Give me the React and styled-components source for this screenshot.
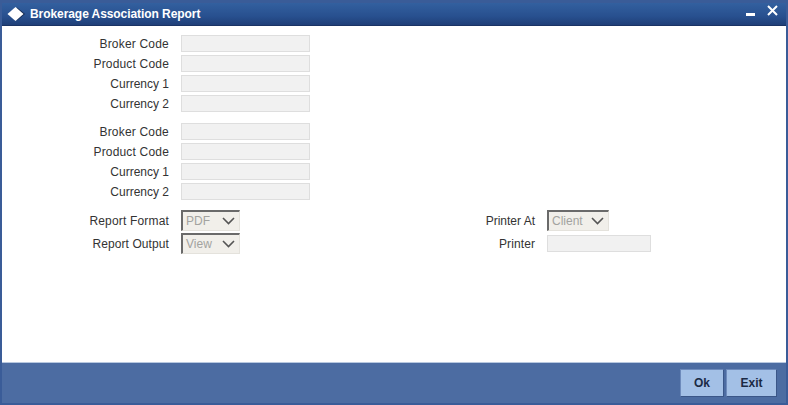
import React from "react";
import styled, { createGlobalStyle } from "styled-components";

const Global = createGlobalStyle`
  html, body { margin: 0; padding: 0; background: #fff; }
  body { font-family: "Liberation Sans", Arial, sans-serif; }
`;

const Window = styled.div`
  width: 788px;
  height: 405px;
  box-sizing: border-box;
  display: flex;
  flex-direction: column;
  background: #3a5c98;
  padding: 3px 2px 2px 2px;
  overflow: hidden;
`;
const TitleBar = styled.div`
  height: 23px;
  flex: none;
  display: flex;
  align-items: center;
  background: linear-gradient(#33609f, #28508f 60%, #1f3f78);
  border-bottom: 1px solid #1a3364;
  box-sizing: border-box;
  padding: 0 8px 0 5px;
  color: #fff;
`;
const Title = styled.div`
  font-size: 12px;
  font-weight: 700;
  letter-spacing: -0.07px;
  margin-left: 5px;
  flex: 1;
`;
const Body = styled.div`
  flex: 1;
  background: #fff;
  padding: 9px 0 0;
  display: flex;
  flex-direction: column;
`;
const Group = styled.div`
  display: flex;
  flex-direction: column;
  gap: 3px;
  margin-bottom: ${(p) => p.$after || 0}px;
`;
const Row = styled.div`
  display: flex;
  align-items: center;
  height: 17px;
`;
const Label = styled.label`
  width: 167px;
  text-align: right;
  font-size: 12px;
  color: #333;
  margin-right: 12px;
  letter-spacing: ${(p) => p.$ls || 0}px;
`;
const Input = styled.div`
  width: ${(p) => p.$w || 129}px;
  height: 17px;
  box-sizing: border-box;
  background: #f1f1f1;
  border: 1px solid #dedede;
`;
const SelectRows = styled.div`
  display: grid;
  grid-template-columns: 366px 1fr;
  grid-template-rows: 21px 21px;
  row-gap: 2px;
`;
const Cell = styled.div`
  display: flex;
  align-items: center;
`;
const Select = styled.div`
  width: ${(p) => p.$w}px;
  height: 21px;
  box-sizing: border-box;
  background: #f1efea;
  border-top: 2px solid #6a6a6a;
  border-left: 2px solid #6a6a6a;
  border-right: 1px solid #e4e2dc;
  border-bottom: 1px solid #e4e2dc;
  display: flex;
  align-items: center;
  justify-content: space-between;
  padding: 0 4px 0 3px;
  font-size: 12px;
  color: #a3a3a0;
`;
const Footer = styled.div`
  height: 41px;
  flex: none;
  box-sizing: border-box;
  background: #4c6ca2;
  border-top: 1px solid #b8c8e0;
  display: flex;
  justify-content: flex-end;
  align-items: flex-start;
  gap: 2px;
  padding: 6px 9px 0 0;
`;
const Button = styled.button`
  width: 44px;
  height: 28px;
  font: 700 12px "Liberation Sans", Arial, sans-serif;
  color: #1b2a44;
  background: #a3c0e6;
  border: 1px solid #3a5688;
  border-top-color: #6d8abb;
  border-left-color: #6d8abb;
  padding: 0;
`;
const ExitButton = styled(Button)`
  width: 51px;
`;

const Chevron = () => (
  <svg width="13" height="8" viewBox="0 0 13 8">
    <path d="M1 1l5.5 5.5L12 1" fill="none" stroke="#555" strokeWidth="1.6" />
  </svg>
);

const FIELDS = [
  ["Broker Code", 0.2],
  ["Product Code", 0.18],
  ["Currency 1", 0],
  ["Currency 2", 0],
];

const Fields = () => (
  <>
    {FIELDS.map(([t, ls]) => (
      <Row key={t}>
        <Label $ls={ls}>{t}</Label>
        <Input />
      </Row>
    ))}
  </>
);

export default function App() {
  return (
    <>
      <Global />
      <Window>
        <TitleBar>
          <svg width="18" height="16" viewBox="0 0 18 16">
            <path d="M10 1.5l8 6.5-8 6.5z" fill="#14294f" />
            <path d="M8.5 1l8 7-8 7-8-7z" fill="#fff" />
          </svg>
          <Title>Brokerage Association Report</Title>
          <svg width="44" height="22" viewBox="0 0 44 22">
            <rect x="12" y="10" width="9" height="3" fill="#fff" />
            <path d="M34 3l9 9M43 3l-9 9" stroke="#fff" strokeWidth="2" fill="none" />
          </svg>
        </TitleBar>
        <Body>
          <Group $after={11}><Fields /></Group>
          <Group $after={10}><Fields /></Group>
          <SelectRows>
            <Cell>
              <Label $ls={0.17}>Report Format</Label>
              <Select $w={59}>PDF<Chevron /></Select>
            </Cell>
            <Cell>
              <Label>Printer At</Label>
              <Select $w={62}>Client<Chevron /></Select>
            </Cell>
            <Cell>
              <Label $ls={0.09}>Report Output</Label>
              <Select $w={59}>View<Chevron /></Select>
            </Cell>
            <Cell>
              <Label $ls={0.1}>Printer</Label>
              <Input $w={104} />
            </Cell>
          </SelectRows>
        </Body>
        <Footer>
          <Button>Ok</Button>
          <ExitButton>Exit</ExitButton>
        </Footer>
      </Window>
    </>
  );
}
